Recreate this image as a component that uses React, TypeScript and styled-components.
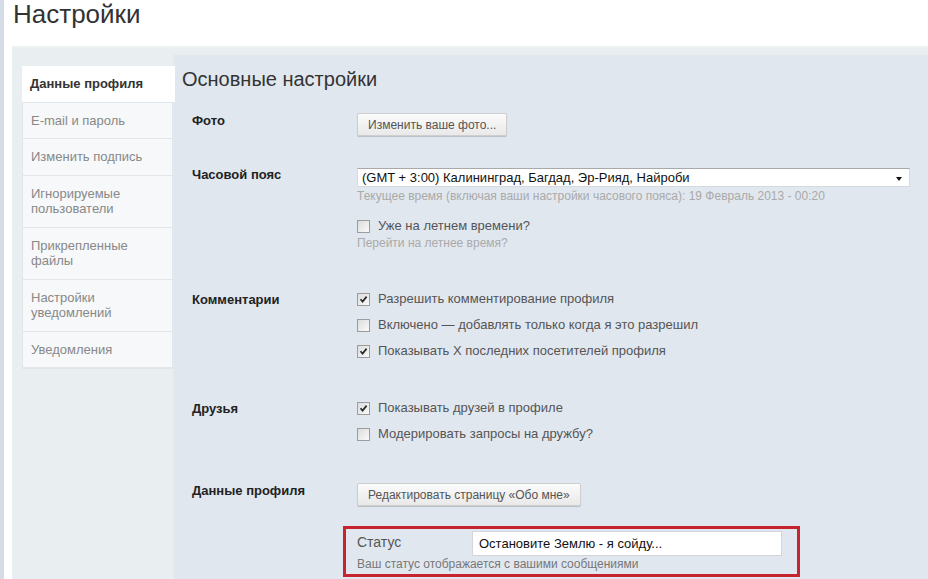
import React from "react";
import styled, { createGlobalStyle } from "styled-components";

const GlobalStyle = createGlobalStyle`
  html, body {
    margin: 0;
    padding: 0;
    background: #ffffff;
    overflow: hidden;
  }
  body {
    font-family: "Liberation Sans", Arial, sans-serif;
    color: #333;
  }
`;

const Check = ({ checked }: { checked?: boolean }) => (
  <Box>
    {checked && (
      <svg width="9" height="9" viewBox="0 0 9 9">
        <path d="M1.5 4.2 L3.6 6.6 L7.6 1.6" fill="none" stroke="#2b2b2b" strokeWidth="1.7" />
      </svg>
    )}
  </Box>
);

const CheckItem = ({ checked, children }: { checked?: boolean; children: React.ReactNode }) => (
  <CheckRow>
    <Check checked={checked} />
    <CheckText>{children}</CheckText>
  </CheckRow>
);

export default function App() {
  return (
    <Page>
      <GlobalStyle />
      <Title>Настройки</Title>
      <Panel>
        <Sidebar>
          <NavItem $active>Данные профиля</NavItem>
          <NavItem>E-mail и пароль</NavItem>
          <NavItem>Изменить подпись</NavItem>
          <NavItem>
            Игнорируемые
            <br />
            пользователи
          </NavItem>
          <NavItem>
            Прикрепленные
            <br />
            файлы
          </NavItem>
          <NavItem>
            Настройки
            <br />
            уведомлений
          </NavItem>
          <NavItem>Уведомления</NavItem>
        </Sidebar>

        <Main>
          <Heading>Основные настройки</Heading>
          <Form>
            <Row $top={21}>
              <Label>Фото</Label>
              <Controls>
                <Button>Изменить ваше фото...</Button>
              </Controls>
            </Row>

            <Row $top={30}>
              <Label>Часовой пояс</Label>
              <Controls>
                <Select>
                  <span>(GMT + 3:00) Калининград, Багдад, Эр-Рияд, Найроби</span>
                  <Arrow />
                </Select>
                <Hint>Текущее время (включая ваши настройки часового пояса): 19 Февраль 2013 - 00:20</Hint>
                <Spacer />
                <CheckItem>Уже на летнем времени?</CheckItem>
                <Hint>Перейти на летнее время?</Hint>
              </Controls>
            </Row>

            <Row $top={40}>
              <Label>Комментарии</Label>
              <CheckList>
                <CheckItem checked>Разрешить комментирование профиля</CheckItem>
                <CheckItem>Включено — добавлять только когда я это разрешил</CheckItem>
                <CheckItem checked>Показывать X последних посетителей профиля</CheckItem>
              </CheckList>
            </Row>

            <Row $top={41}>
              <Label>Друзья</Label>
              <CheckList>
                <CheckItem checked>Показывать друзей в профиле</CheckItem>
                <CheckItem>Модерировать запросы на дружбу?</CheckItem>
              </CheckList>
            </Row>

            <Row $top={40}>
              <Label>Данные профиля</Label>
              <Controls>
                <Button>Редактировать страницу «Обо мне»</Button>
              </Controls>
            </Row>

            <StatusBox>
              <StatusLine>
                <StatusLabel>Статус</StatusLabel>
                <StatusInput>Остановите Землю - я сойду...</StatusInput>
              </StatusLine>
              <StatusHint>Ваш статус отображается с вашими сообщениями</StatusHint>
            </StatusBox>
          </Form>
        </Main>
      </Panel>
    </Page>
  );
}

const Page = styled.div`
  border-left: 4px solid #d5dce5;
  padding-left: 8px;
  height: 100vh;
  box-sizing: border-box;
  display: flex;
  flex-direction: column;
`;

const Title = styled.h1`
  margin: 0;
  height: 46px;
  padding-left: 1px;
  font-weight: 400;
  font-size: 26px;
  line-height: 29px;
  color: #333;
`;

const Panel = styled.div`
  flex: 1;
  display: flex;
  align-items: flex-start;
  background: #e9eef1;
  border-top: 2px solid #eef2f3;
  padding: 7px 0 0 10px;
`;

const Sidebar = styled.ul`
  list-style: none;
  margin: 11px 0 0;
  padding: 0;
  width: 151px;
  flex-shrink: 0;
  background: #f6f8fa;
  border: 1px solid #e1e6eb;
  border-top: none;
  box-sizing: border-box;
`;

const NavItem = styled.li<{ $active?: boolean }>`
  position: relative;
  padding: 10px 8px 10px 8px;
  margin: ${(p) => (p.$active ? "0 -3px 0 -1px" : "0")};
  font-size: 13px;
  line-height: 15.5px;
  color: ${(p) => (p.$active ? "#333" : "#888")};
  font-weight: ${(p) => (p.$active ? 700 : 400)};
  background: ${(p) => (p.$active ? "#ffffff" : "transparent")};
  border-bottom: 1px solid #e1e6eb;
  z-index: ${(p) => (p.$active ? 1 : 0)};
`;

const Main = styled.section`
  flex: 1;
  align-self: stretch;
  background: #e1e7ef;
  border-left: 1px solid #e5eaf0;
  padding: 12px 0 0 8px;
`;

const Heading = styled.h2`
  margin: 0;
  font-weight: 400;
  font-size: 20px;
  line-height: 24px;
  color: #333;
`;

const Form = styled.div`
  padding-left: 10px;
  display: flex;
  flex-direction: column;
`;

const Row = styled.div<{ $top: number }>`
  display: flex;
  align-items: flex-start;
  margin-top: ${(p) => p.$top}px;
`;

const Label = styled.div`
  width: 165px;
  flex-shrink: 0;
  padding-top: 1px;
  font-weight: 700;
  font-size: 13px;
  line-height: 16px;
  color: #222;
`;

const Controls = styled.div`
  flex: 1;
  display: flex;
  flex-direction: column;
  align-items: flex-start;
  padding-right: 18px;
`;

const Button = styled.button`
  margin-top: 1px;
  height: 23px;
  padding: 0 10px;
  font-family: "Liberation Sans", Arial, sans-serif;
  font-size: 12px;
  color: #555;
  background: linear-gradient(#fbfbfb, #e9e9e9);
  border: 1px solid #cfcfcf;
  border-radius: 2px;
  box-shadow: 0 1px 1px rgba(0, 0, 0, 0.18);
`;

const Select = styled.div`
  align-self: stretch;
  margin-top: 2px;
  height: 19px;
  box-sizing: border-box;
  display: flex;
  align-items: center;
  justify-content: space-between;
  padding: 0 7px 0 4px;
  background: #fff;
  border: 1px solid #d6d9dd;
  border-top-color: #a9a9a9;
  font-size: 13px;
  color: #111;
`;

const Arrow = styled.span`
  width: 0;
  height: 0;
  border-left: 3.5px solid transparent;
  border-right: 3.5px solid transparent;
  border-top: 4px solid #111;
  margin-top: 2px;
`;

const Hint = styled.div`
  margin-top: 1px;
  font-size: 12px;
  line-height: 16px;
  color: #aaa;
`;

const Spacer = styled.div`
  height: 14px;
`;

const CheckList = styled.div`
  display: flex;
  flex-direction: column;
  gap: 10px;
`;

const CheckRow = styled.label`
  display: flex;
  align-items: center;
  gap: 8px;
  height: 16px;
`;

const Box = styled.span`
  width: 13px;
  height: 13px;
  box-sizing: border-box;
  display: flex;
  align-items: center;
  justify-content: center;
  border: 1px solid #9c9c9c;
  background: linear-gradient(135deg, #dcdcdc, #fafafa);
`;

const CheckText = styled.span`
  font-size: 13px;
  line-height: 16px;
  color: #555;
`;

const StatusBox = styled.div`
  margin: 20px 0 0 151px;
  width: 457px;
  box-sizing: border-box;
  border: 3px solid #c8242f;
  padding: 2px 15px 2px 11px;
`;

const StatusLine = styled.div`
  display: flex;
  align-items: flex-start;
`;

const StatusLabel = styled.div`
  width: 115px;
  margin-top: 2px;
  font-size: 14px;
  line-height: 18px;
  color: #555;
`;

const StatusInput = styled.div`
  flex: 1;
  height: 25px;
  box-sizing: border-box;
  padding: 0 6px;
  display: flex;
  align-items: center;
  background: #fff;
  border: 1px solid #d2d6db;
  font-size: 13px;
  color: #111;
`;

const StatusHint = styled.div`
  font-size: 12px;
  line-height: 16px;
  color: #777;
`;
